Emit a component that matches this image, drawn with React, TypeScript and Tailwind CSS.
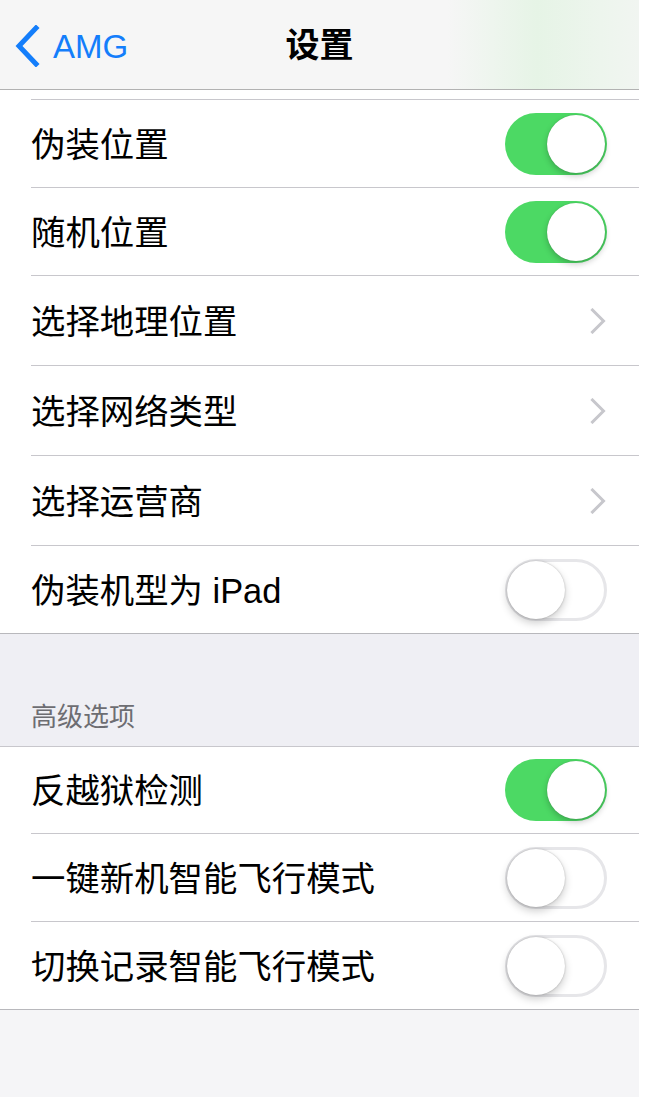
import React from "react";

const FONT = { fontFamily: '"Liberation Sans", "Noto Sans CJK SC", sans-serif' };

function Toggle({ on }: { on: boolean }) {
  return (
    <div
      className={
        on
          ? "relative h-[62px] w-[102px] shrink-0 rounded-full bg-[#4cd964]"
          : "relative h-[62px] w-[102px] shrink-0 rounded-full border-[3px] border-[#e6e6e9] bg-white"
      }
    >
      <div
        className={
          on
            ? "absolute right-[2px] top-[2px] h-[58px] w-[58px] rounded-full bg-white shadow-[0_3px_6px_rgba(0,0,0,0.22),0_0_1px_rgba(0,0,0,0.25)]"
            : "absolute left-[-1px] top-[-1px] h-[58px] w-[58px] rounded-full bg-white shadow-[0_4px_8px_rgba(0,0,0,0.2),0_0_2px_rgba(0,0,0,0.25)]"
        }
      />
    </div>
  );
}

function Chevron() {
  return (
    <svg width="16" height="26" viewBox="0 0 16 26" className="mr-[1px] shrink-0">
      <path d="M2.5 2 L13.5 13 L2.5 24" fill="none" stroke="#c7c7cc" strokeWidth="3" strokeLinecap="square" />
    </svg>
  );
}

type RowProps = {
  label: string;
  h: string;
  right: React.ReactNode;
  last?: boolean;
};

function Row({ label, h, right, last }: RowProps) {
  const inner = (
    <div
      className={
        last
          ? "flex h-full items-center justify-between pr-[32px]"
          : "flex h-full items-center justify-between border-b border-[#c8c7cc] pr-[32px]"
      }
    >
      <span className="mt-[3px] text-[34.4px] leading-none text-black">{label}</span>
      {right}
    </div>
  );
  return (
    <div className={last ? `${h} border-b border-[#b8b8bc] bg-white pl-[31px]` : `${h} bg-white pl-[31px]`}>
      {inner}
    </div>
  );
}

export default function App() {
  return (
    <div className="min-h-[1097px] w-[651px] bg-white" style={FONT}>
      <div className="flex min-h-[1097px] w-[639px] flex-col">
        {/* Nav bar */}
        <div className="relative flex h-[90px] items-center justify-center border-b border-[#b2b2b2] bg-[linear-gradient(to_right,#f6f6f6_0%,#f6f6f6_70%,#e6f4e6_84%,#edf5ed_94%,#f1f5f1_100%)]">
          <div className="absolute left-[14px] top-[25px] flex items-center">
            <svg width="28" height="42" viewBox="0 0 28 42">
              <path d="M22 3 L5 21 L22 39" fill="none" stroke="#147efb" strokeWidth="5" strokeLinecap="square" />
            </svg>
            <span className="ml-[11px] text-[33px] leading-none text-[#147efb]">AMG</span>
          </div>
          <span className="text-[34px] font-semibold leading-none text-black">设置</span>
        </div>

        {/* partial row tail */}
        <div className="h-[10px] bg-white pl-[31px]">
          <div className="h-full border-b border-[#c8c7cc]" />
        </div>

        <Row label="伪装位置" h="h-[88px]" right={<Toggle on />} />
        <Row label="随机位置" h="h-[88px]" right={<Toggle on />} />
        <Row label="选择地理位置" h="h-[90px]" right={<Chevron />} />
        <Row label="选择网络类型" h="h-[90px]" right={<Chevron />} />
        <Row label="选择运营商" h="h-[90px]" right={<Chevron />} />
        <Row label="伪装机型为 iPad" h="h-[88px]" right={<Toggle on={false} />} last />

        <div className="flex h-[113px] items-end border-b border-[#c8c7cc] bg-[#efeff4] pb-[16px] pl-[31px]">
          <span className="text-[26px] leading-[26px] text-[#6d6d72]">高级选项</span>
        </div>

        <Row label="反越狱检测" h="h-[87px]" right={<Toggle on />} />
        <Row label="一键新机智能飞行模式" h="h-[88px]" right={<Toggle on={false} />} />
        <Row label="切换记录智能飞行模式" h="h-[88px]" right={<Toggle on={false} />} last />

        <div className="flex-1 bg-[#f5f5f7]" />
      </div>
    </div>
  );
}
